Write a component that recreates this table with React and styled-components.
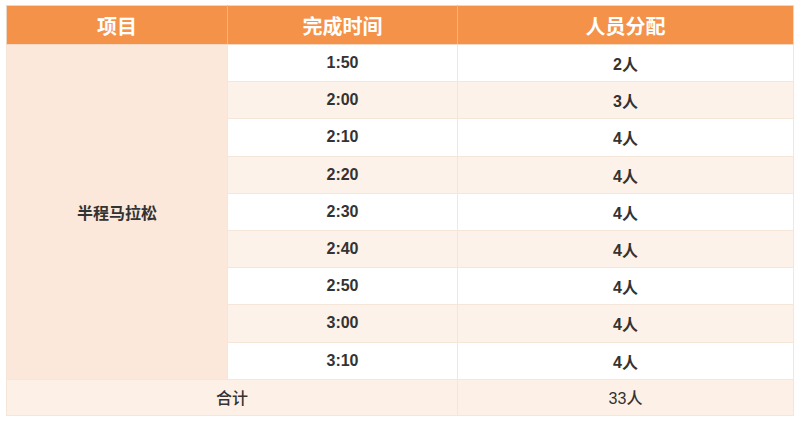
import * as React from 'react';
import styled, {createGlobalStyle} from "styled-components";

const GlobalStyle = createGlobalStyle`
  html, body {
    margin: 0;
    padding: 0;
    background: #ffffff;
  }
  body {
    font-family: "Liberation Sans", "Noto Sans CJK SC", sans-serif;
    color: #333333;
  }
`

const Page = styled.div`
  padding: 5px 6px 0 6px;
`

const Table = styled.table`
  width: 788px;
  border-collapse: collapse;
  table-layout: fixed;
  border: 1px solid #ead7c6;
`

const HeadCell = styled.th`
  height: 38px;
  padding: 0;
  background-color: #f5924a;
  color: #ffffff;
  font-size: 20px;
  font-weight: 700;
  text-align: center;
  border-left: 1px solid #f7b27f;
  border-bottom: 1px solid #f2d9c4;

  &:first-child {
    border-left: none;
  }
`

const Row = styled.tr`
  background-color: ${props => props.$shaded ? '#fdf2e9' : '#ffffff'};
`

const Cell = styled.td`
  height: ${props => props.$short ? '35px' : '36.2px'};
  padding: 0;
  text-align: center;
  font-size: 16px;
  font-weight: ${props => props.$light ? 500 : 700};
  border: 1px solid #f5e6da;
`

const GroupCell = styled(Cell)`
  background-color: #fce8da;
`

const TotalRow = styled.tr`
  background-color: #fdf1e7;
`

const rows = [
    {time: '1:50', people: '2人'},
    {time: '2:00', people: '3人'},
    {time: '2:10', people: '4人'},
    {time: '2:20', people: '4人'},
    {time: '2:30', people: '4人'},
    {time: '2:40', people: '4人'},
    {time: '2:50', people: '4人'},
    {time: '3:00', people: '4人'},
    {time: '3:10', people: '4人'},
]

const App = () => {

    return (
        <Page>
            <GlobalStyle/>
            <Table>
                <colgroup>
                    <col style={{width: 221}}/>
                    <col style={{width: 230}}/>
                    <col/>
                </colgroup>
                <thead>
                <tr>
                    <HeadCell>项目</HeadCell>
                    <HeadCell>完成时间</HeadCell>
                    <HeadCell>人员分配</HeadCell>
                </tr>
                </thead>
                <tbody>
                {rows.map((row, i) => (
                    <Row key={row.time} $shaded={i % 2 === 1}>
                        {i === 0 && <GroupCell rowSpan={rows.length}>半程马拉松</GroupCell>}
                        <Cell>{row.time}</Cell>
                        <Cell>{row.people}</Cell>
                    </Row>
                ))}
                <TotalRow>
                    <Cell colSpan={2} $light $short>合计</Cell>
                    <Cell $light $short>33人</Cell>
                </TotalRow>
                </tbody>
            </Table>
        </Page>
    )
}

export default App
